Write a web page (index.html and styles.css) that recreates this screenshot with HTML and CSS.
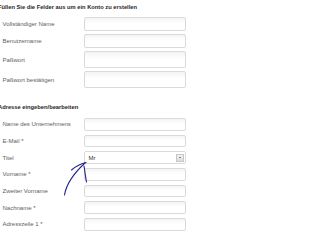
FILE: index.html
```html
<!DOCTYPE html>
<html lang="de">
<head>
<meta charset="utf-8">
<title>Konto erstellen</title>
<link rel="stylesheet" href="styles.css">
</head>
<body>
<div class="page">
  <section class="sec sec-account">
    <h2 class="heading">Füllen Sie die Felder aus um ein Konto zu erstellen</h2>
    <div class="rows rows-account">
      <div class="row"><span class="label">Vollständiger Name</span><span class="field"></span></div>
      <div class="row"><span class="label">Benutzername</span><span class="field"></span></div>
      <div class="row tall"><span class="label">Paßwort</span><span class="field"></span></div>
      <div class="row tall"><span class="label">Paßwort bestätigen</span><span class="field"></span></div>
    </div>
  </section>
  <section class="sec sec-address">
    <h2 class="heading">Adresse eingeben/bearbeiten</h2>
    <div class="rows rows-address">
      <div class="row"><span class="label">Name des Unternehmens</span><span class="field"></span></div>
      <div class="row"><span class="label">E-Mail *</span><span class="field"></span></div>
      <div class="row"><span class="label">Titel</span><span class="field select"><span class="sel-text">Mr</span><span class="sel-btn"><span class="tri"></span></span></span></div>
      <div class="row"><span class="label">Vorname *</span><span class="field"></span></div>
      <div class="row"><span class="label">Zweiter Vorname</span><span class="field"></span></div>
      <div class="row"><span class="label">Nachname *</span><span class="field"></span></div>
      <div class="row"><span class="label">Adresszeile 1 *</span><span class="field"></span></div>
    </div>
  </section>
  <svg class="annot" width="215" height="234" viewBox="0 0 215 234" aria-hidden="true">
    <path d="M64.5 195 C66 186, 72 175, 85 163" />
    <path d="M71.5 170 C76 166, 80 164, 86 162.5" />
    <path d="M84 166 C85 172, 85.5 177, 86.5 182" />
  </svg>
</div>
</body>
</html>
```

FILE: styles.css
```css
html, body {
  margin: 0;
  padding: 0;
  background: #ffffff;
}

body {
  width: 215px;
  height: 234px;
  overflow: hidden;
  font-family: "Liberation Sans", Arial, sans-serif;
}

.page {
  position: relative;
  width: 215px;
  height: 234px;
  overflow: hidden;
}

.sec {
  display: flex;
  flex-direction: column;
}

.sec-account {
  padding-top: 3px;
}

.sec-address {
  margin-top: 15px;
}

.heading {
  margin: 0 0 0 -2px;
  font-size: 5.75px;
  line-height: 8px;
  height: 8px;
  font-weight: bold;
  color: #262626;
  white-space: nowrap;
}

.sec-account .heading {
  margin-bottom: 6px;
}

.sec-address .heading {
  margin-bottom: 7px;
}

.rows {
  display: flex;
  flex-direction: column;
}

.rows-account {
  gap: 3px;
}

.rows-address {
  gap: 4px;
}

.row {
  display: grid;
  grid-template-columns: 84px 102px;
  align-items: center;
  height: 14px;
}

.rows-account .row.tall {
  height: 17px;
}

.rows-address .row {
  height: 12.7px;
}

.label {
  padding-left: 2.5px;
  font-size: 6px;
  line-height: 8px;
  color: #5e5e5e;
  white-space: nowrap;
}

.field {
  box-sizing: border-box;
  height: 100%;
  border: 1px solid #dadada;
  border-radius: 2px;
  background: linear-gradient(to bottom, #f4f4f4 0%, #ffffff 45%, #ffffff 100%);
}

.select {
  display: flex;
  align-items: center;
  justify-content: space-between;
  padding: 0 1.5px 0 3.5px;
  background: #ffffff;
}

.sel-text {
  font-size: 6px;
  line-height: 8px;
  color: #333333;
}

.sel-btn {
  box-sizing: border-box;
  width: 8px;
  height: 8px;
  border: 1px solid #c6c6c6;
  background: linear-gradient(to bottom, #f0f0f0, #dcdcdc);
  display: flex;
  align-items: center;
  justify-content: center;
}

.tri {
  width: 0;
  height: 0;
  border-left: 1.5px solid transparent;
  border-right: 1.5px solid transparent;
  border-top: 1.5px solid #222222;
}

.annot {
  position: absolute;
  left: 0;
  top: 0;
  pointer-events: none;
}

.annot path {
  fill: none;
  stroke: #23238c;
  stroke-width: 1.1;
  stroke-linecap: round;
  stroke-linejoin: round;
}
```
